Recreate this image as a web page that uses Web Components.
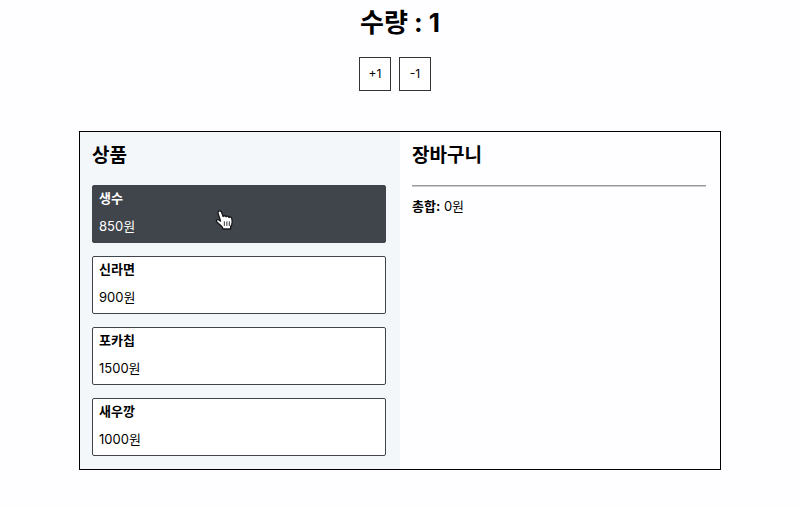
<!DOCTYPE html>
<html lang="ko">
<head>
<meta charset="utf-8">
<title>장바구니</title>
<style>
  body {
    margin: 0;
    background: #fefdff;
    color: #000;
    font-family: Inter, "Noto Sans CJK KR", sans-serif;
    font-size: 13px;
    line-height: 20px;
  }
</style>
</head>
<body>
<quantity-counter count="1"></quantity-counter>
<shop-board>
  <shop-panel slot="products" heading="상품">
    <product-item name="생수" price="850" active><hand-pointer></hand-pointer></product-item>
    <product-item name="신라면" price="900"></product-item>
    <product-item name="포카칩" price="1500"></product-item>
    <product-item name="새우깡" price="1000"></product-item>
  </shop-panel>
  <shop-panel slot="cart" heading="장바구니">
    <cart-total total="0"></cart-total>
  </shop-panel>
</shop-board>

<script>
/********************************* QuantityCounter ******************************************/
const counterTemplate = document.createElement('template');
counterTemplate.innerHTML = `
  <style>
    :host {
      display: flex;
      flex-direction: column;
      align-items: center;
      gap: 14px;
      padding-top: 3px;
    }
    h1 {
      margin: 0;
      font-size: 26px;
      line-height: 40px;
    }
    .buttons {
      display: flex;
      gap: 8px;
      margin-right: 10px;
    }
    button {
      box-sizing: border-box;
      width: 32px;
      height: 34px;
      padding: 0 0 2px;
      border: 1px solid #333;
      background: #fff;
      color: inherit;
      font: 12px Inter, sans-serif;
      cursor: pointer;
    }
  </style>
  <h1>수량 : <span id="count"></span></h1>
  <div class="buttons">
    <button id="plus" type="button">+1</button>
    <button id="minus" type="button">-1</button>
  </div>`;

class QuantityCounter extends HTMLElement {
  static get observedAttributes() {
    return ['count'];
  }

  constructor() {
    super();
    this.attachShadow({ mode: 'open' });
    this.shadowRoot.appendChild(counterTemplate.content.cloneNode(true));
    this._count = this.shadowRoot.querySelector('#count');
    this.shadowRoot.querySelector('#plus').addEventListener('click', () => this.count++);
    this.shadowRoot.querySelector('#minus').addEventListener('click', () => this.count--);
  }

  attributeChangedCallback(name, oldValue, newValue) {
    this._count.textContent = newValue;
  }

  get count() {
    return Number(this.getAttribute('count'));
  }

  set count(value) {
    this.setAttribute('count', value);
  }
}

customElements.define('quantity-counter', QuantityCounter);

/********************************* ShopBoard ******************************************/
const boardTemplate = document.createElement('template');
boardTemplate.innerHTML = `
  <style>
    :host {
      display: grid;
      grid-template-columns: 1fr 1fr;
      width: 80%;
      margin: 40px auto;
      border: 1px solid #000;
    }
    ::slotted([slot='products']) {
      background: #f4f7fa;
    }
  </style>
  <slot name="products"></slot>
  <slot name="cart"></slot>`;

class ShopBoard extends HTMLElement {
  constructor() {
    super();
    this.attachShadow({ mode: 'open' });
    this.shadowRoot.appendChild(boardTemplate.content.cloneNode(true));
  }

  connectedCallback() {
    this.addEventListener('add', this._onAdd);
  }

  disconnectedCallback() {
    this.removeEventListener('add', this._onAdd);
  }

  _onAdd(event) {
    const cart = this.querySelector('cart-total');
    cart.total += event.detail.price;
  }
}

customElements.define('shop-board', ShopBoard);

/********************************* ShopPanel ******************************************/
const panelTemplate = document.createElement('template');
panelTemplate.innerHTML = `
  <style>
    :host {
      display: flex;
      flex-direction: column;
      gap: 13px;
      padding: 8px 14px 13px 12px;
    }
    h2 {
      margin: 0;
      font-size: 19px;
      line-height: 32px;
    }
  </style>
  <h2></h2>
  <slot></slot>`;

class ShopPanel extends HTMLElement {
  constructor() {
    super();
    this.attachShadow({ mode: 'open' });
    this.shadowRoot.appendChild(panelTemplate.content.cloneNode(true));
  }

  connectedCallback() {
    this.shadowRoot.querySelector('h2').textContent = this.getAttribute('heading');
  }
}

customElements.define('shop-panel', ShopPanel);

/********************************* ProductItem ******************************************/
const productTemplate = document.createElement('template');
productTemplate.innerHTML = `
  <style>
    :host {
      display: block;
      position: relative;
    }
    button {
      display: flex;
      flex-direction: column;
      gap: 8px;
      width: 100%;
      padding: 2px 6px 6px;
      border: 1px solid #40454c;
      border-radius: 2px;
      background: #fff;
      color: inherit;
      font: inherit;
      text-align: left;
      cursor: pointer;
    }
    button:hover,
    :host([active]) button {
      background: #40454c;
      color: #fff;
    }
  </style>
  <button type="button">
    <strong></strong>
    <span></span>
  </button>
  <slot></slot>`;

class ProductItem extends HTMLElement {
  constructor() {
    super();
    this.attachShadow({ mode: 'open' });
    this.shadowRoot.appendChild(productTemplate.content.cloneNode(true));
    this.shadowRoot.querySelector('button').addEventListener('click', () => this._add());
  }

  connectedCallback() {
    this.shadowRoot.querySelector('strong').textContent = this.getAttribute('name');
    this.shadowRoot.querySelector('span').textContent = `${this.price}원`;
  }

  get price() {
    return Number(this.getAttribute('price'));
  }

  _add() {
    this.dispatchEvent(new CustomEvent('add', { detail: { price: this.price }, bubbles: true }));
  }
}

customElements.define('product-item', ProductItem);

/********************************* CartTotal ******************************************/
const totalTemplate = document.createElement('template');
totalTemplate.innerHTML = `
  <style>
    :host {
      display: block;
    }
    hr {
      margin: 0 0 9px;
      border: 0;
      border-top: 1px solid #999;
      border-bottom: 1px solid #ccc;
    }
  </style>
  <hr>
  <strong>총합:</strong> <span></span>`;

class CartTotal extends HTMLElement {
  static get observedAttributes() {
    return ['total'];
  }

  constructor() {
    super();
    this.attachShadow({ mode: 'open' });
    this.shadowRoot.appendChild(totalTemplate.content.cloneNode(true));
  }

  attributeChangedCallback(name, oldValue, newValue) {
    this.shadowRoot.querySelector('span').textContent = `${newValue}원`;
  }

  get total() {
    return Number(this.getAttribute('total'));
  }

  set total(value) {
    this.setAttribute('total', value);
  }
}

customElements.define('cart-total', CartTotal);

/********************************* HandPointer ******************************************/
const pointerTemplate = document.createElement('template');
pointerTemplate.innerHTML = `
  <style>
    :host {
      position: absolute;
      top: 24px;
      left: 42%;
      pointer-events: none;
    }
    svg {
      display: block;
    }
  </style>
  <svg width="20" height="22" viewBox="0 0 18 20" aria-hidden="true">
    <path d="M3.2 2.1C4.4 1.2 5.6 2 6 3.2L7.3 6.8C8 5.8 9.5 6 10 7C10.9 6.1 12.1 6.5 12.6 7.6C13.6 6.9 14.9 7.4 15.2 8.7C15.6 10.5 15.9 12.3 15.1 14.2L14.1 16.2V18.2H7.2L6.6 16.5C5.1 14.6 3.4 13.3 1.5 11.7C.5 10.6 1.7 9.3 3.1 9.8L5 11L2.8 4.3C2.5 3.4 2.4 2.7 3.2 2.1Z" fill="#fff" stroke="#15171a" stroke-width="1.2" stroke-linejoin="round"/>
    <path d="M8.4 11.2V15.4M10.7 11.2V15.4M12.9 11.2V15.4" fill="none" stroke="#15171a" stroke-width=".8"/>
  </svg>`;

class HandPointer extends HTMLElement {
  constructor() {
    super();
    this.attachShadow({ mode: 'open' });
    this.shadowRoot.appendChild(pointerTemplate.content.cloneNode(true));
  }
}

customElements.define('hand-pointer', HandPointer);
</script>
</body>
</html>
